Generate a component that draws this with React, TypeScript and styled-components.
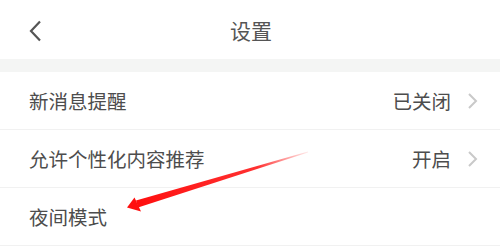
import * as React from 'react';
import styled, { createGlobalStyle } from 'styled-components';

const Global = createGlobalStyle`
  html, body { margin: 0; padding: 0; background: #fff; }
  body { font-family: "Noto Sans CJK SC", "Noto Sans", sans-serif; }
`;

const Page = styled.div`
  position: relative;
  width: 500px;
  height: 250px;
  overflow: hidden;
  background: #fff;
`;

const Header = styled.div`
  height: 59px;
  display: flex;
  align-items: center;
  justify-content: center;
  position: relative;
`;

const Back = styled.button`
  position: absolute;
  left: 24px;
  top: 18px;
  width: 22px;
  height: 26px;
  padding: 0;
  border: 0;
  background: none;
  display: flex;
  align-items: center;
  justify-content: center;
`;

const Title = styled.div`
  font-size: 21px;
  color: #555;
  line-height: 1;
  margin-left: 2px;
  margin-top: 2px;
`;

const Band = styled.div`
  height: 13px;
  background: #f4f5f4;
`;

const Row = styled.div`
  height: 58px;
  display: flex;
  align-items: center;
  padding: 0 22px 0 29px;
  border-bottom: 1px solid #f1f1f1;
  box-sizing: border-box;
`;

const Label = styled.div`
  flex: 1;
  font-size: 19.5px;
  color: #4d4d4d;
  line-height: 1;
`;

const Value = styled.div`
  font-size: 19.5px;
  color: #4d4d4d;
  line-height: 1;
  margin-right: 16px;
`;

const Overlay = styled.svg`
  position: absolute;
  left: 0;
  top: 0;
  pointer-events: none;
`;

const Chevron = () => (
  <svg width="11" height="18" viewBox="0 0 11 18">
    <path d="M2 2 L9 9 L2 16" fill="none" stroke="#c9c9c9" strokeWidth="2" />
  </svg>
);

const rows = [
  { label: '新消息提醒', value: '已关闭' },
  { label: '允许个性化内容推荐', value: '开启' },
  { label: '夜间模式' },
];

export default function App() {
  return (
    <Page>
      <Global />
      <Header>
        <Back>
          <svg width="14" height="22" viewBox="0 0 14 22">
            <path d="M12 1.5 L3 11 L12 20.5" fill="none" stroke="#555" strokeWidth="2.2" />
          </svg>
        </Back>
        <Title>设置</Title>
      </Header>
      <Band />
      {rows.map((r) => (
        <Row key={r.label}>
          <Label>{r.label}</Label>
          {r.value && (
            <>
              <Value>{r.value}</Value>
              <Chevron />
            </>
          )}
        </Row>
      ))}
      <Overlay width="500" height="250" viewBox="0 0 500 250">
        <defs>
          <linearGradient id="fade" x1="308" y1="152" x2="140" y2="203" gradientUnits="userSpaceOnUse">
            <stop offset="0" stopColor="#ff2a2a" stopOpacity="0.1" />
            <stop offset="0.3" stopColor="#ff1a1a" stopOpacity="0.9" />
            <stop offset="1" stopColor="#ff1010" />
          </linearGradient>
        </defs>
        <polygon points="308,151.6 308,152.4 138,207.5 136,200.5" fill="url(#fade)" />
        <polygon points="127,207.5 134.5,197.5 141,211.5" fill="#ff1010" />
      </Overlay>
    </Page>
  );
}
